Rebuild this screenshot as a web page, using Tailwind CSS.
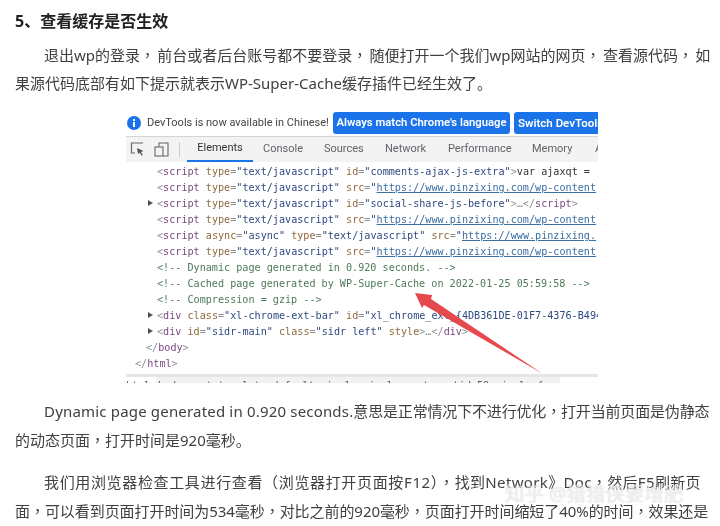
<!DOCTYPE html>
<html lang="zh">
<head>
<meta charset="utf-8">
<script src="https://cdn.jsdelivr.net/npm/@tailwindcss/browser@4"></script>
</head>
<body class="bg-white">
<main class="relative w-[720px] h-[526px] overflow-hidden px-[15px] text-[#404040] font-['Noto_Sans','Noto_Sans_CJK_SC',sans-serif]">
  <h2 class="pt-[9px] h-[40px] text-[16px] leading-[24px] font-bold text-[#222] whitespace-nowrap blur-[0.3px]">5、查看缓存是否生效</h2>
  <p class="text-[15px] leading-[29px] whitespace-nowrap blur-[0.3px]"><span class="block h-[29px] pl-[29px]">退出wp的登录<span lang="zh-TW" class="tracking-[2.25px] font-['Noto_Sans_CJK_TC']">，</span>前台或者后台账号都不要登录<span lang="zh-TW" class="tracking-[2.25px] font-['Noto_Sans_CJK_TC']">，</span>随便打开一个我们wp网站的网页<span lang="zh-TW" class="tracking-[2.25px] font-['Noto_Sans_CJK_TC']">，</span>查看源代码<span lang="zh-TW" class="tracking-[2.25px] font-['Noto_Sans_CJK_TC']">，</span>如</span><span class="block h-[29px]">果源代码底部有如下提示就表示WP-Super-Cache缓存插件已经生效了。</span></p>

  <figure class="relative ml-[111px] mt-[12px] w-[472px] h-[277px] overflow-hidden blur-[0.4px]">
    <div class="flex items-center h-[26px] font-['Roboto',sans-serif] whitespace-nowrap">
      <svg class="ml-[1px] mr-[6px] shrink-0" width="14" height="14" viewBox="0 0 14 14"><circle cx="7" cy="7" r="7" fill="#1a73e8"/><rect x="6" y="6" width="2" height="5" fill="#fff"/><rect x="6" y="3" width="2" height="2" fill="#fff"/></svg>
      <span class="w-[186px] shrink-0 text-[#444] text-[11px]">DevTools is now available in Chinese!</span>
      <span class="flex items-center justify-center w-[177px] h-[22px] shrink-0 rounded-[3px] bg-[#1a73e8] text-white font-semibold text-[11.3px]">Always match Chrome's language</span>
      <span class="block ml-[4px] pl-[4px] w-[84px] h-[22px] leading-[22px] shrink-0 overflow-hidden rounded-l-[3px] bg-[#1a73e8] text-white font-semibold text-[11.5px]">Switch DevTools</span>
    </div>
    <div class="flex items-center h-[26px] bg-[#f3f3f3] border-t border-[#d4d4d4] font-['Roboto',sans-serif] text-[11px] text-[#5f6368] whitespace-nowrap">
      <svg class="ml-[4px] shrink-0" width="15" height="15" viewBox="0 0 15 15" fill="none"><path d="M13 1H1.5V11H5" stroke="#666" stroke-width="1.2"/><path d="M7 6l6.5 3-2.6 1 2 3-1.2.8-2-3L8 12z" fill="#555"/></svg>
      <svg class="ml-[9px] shrink-0" width="15" height="15" viewBox="0 0 15 15" fill="none"><path d="M5 4.5V1h9v13H9" stroke="#666" stroke-width="1.1"/><rect x="1" y="5" width="8" height="9" stroke="#666" stroke-width="1.1"/></svg>
      <span class="ml-[10px] w-px h-[15px] bg-[#ccc] shrink-0"></span>
      <span class="flex items-center justify-center ml-[7px] w-[66px] h-full text-[#333] border-b-2 border-[#1a73e8] shrink-0">Elements</span>
      <span class="ml-[10px] w-[61px] shrink-0">Console</span>
      <span class="w-[61px] shrink-0">Sources</span>
      <span class="w-[63px] shrink-0">Network</span>
      <span class="w-[84px] shrink-0">Performance</span>
      <span class="w-[63px] shrink-0">Memory</span>
      <span class="shrink-0">A</span>
    </div>
    <div class="pt-[2px] font-['DejaVu_Sans_Mono',monospace] text-[10.15px] leading-[16px] text-[#8a8f96] whitespace-nowrap">
      <div class="pl-[31px]">&lt;<span class="text-[#7b4a80]">script</span> <span class="text-[#8f6a3a]">type</span>=<span class="text-[#2e4a80]">"text/javascript"</span> <span class="text-[#8f6a3a]">id</span>=<span class="text-[#2e4a80]">"comments-ajax-js-extra"</span>&gt;<span class="text-[#333]">var ajaxqt =</span></div>
      <div class="pl-[31px]">&lt;<span class="text-[#7b4a80]">script</span> <span class="text-[#8f6a3a]">type</span>=<span class="text-[#2e4a80]">"text/javascript"</span> <span class="text-[#8f6a3a]">src</span>=<span class="text-[#2e4a80]">"<span class="underline text-[#3a6ea5]">https://www.pinzixing.com/wp-content</span></span></div>
      <div class="relative pl-[31px]"><span class="absolute left-[22px] top-[4px] w-0 h-0 border-y-[3.5px] border-y-transparent border-l-[5px] border-l-[#555]"></span>&lt;<span class="text-[#7b4a80]">script</span> <span class="text-[#8f6a3a]">type</span>=<span class="text-[#2e4a80]">"text/javascript"</span> <span class="text-[#8f6a3a]">id</span>=<span class="text-[#2e4a80]">"social-share-js-before"</span>&gt;…&lt;/<span class="text-[#7b4a80]">script</span>&gt;</div>
      <div class="pl-[31px]">&lt;<span class="text-[#7b4a80]">script</span> <span class="text-[#8f6a3a]">type</span>=<span class="text-[#2e4a80]">"text/javascript"</span> <span class="text-[#8f6a3a]">src</span>=<span class="text-[#2e4a80]">"<span class="underline text-[#3a6ea5]">https://www.pinzixing.com/wp-content</span></span></div>
      <div class="pl-[31px]">&lt;<span class="text-[#7b4a80]">script</span> <span class="text-[#8f6a3a]">async</span>=<span class="text-[#2e4a80]">"async"</span> <span class="text-[#8f6a3a]">type</span>=<span class="text-[#2e4a80]">"text/javascript"</span> <span class="text-[#8f6a3a]">src</span>=<span class="text-[#2e4a80]">"<span class="underline text-[#3a6ea5]">https://www.pinzixing.</span></span></div>
      <div class="pl-[31px]">&lt;<span class="text-[#7b4a80]">script</span> <span class="text-[#8f6a3a]">type</span>=<span class="text-[#2e4a80]">"text/javascript"</span> <span class="text-[#8f6a3a]">src</span>=<span class="text-[#2e4a80]">"<span class="underline text-[#3a6ea5]">https://www.pinzixing.com/wp-content</span></span></div>
      <div class="pl-[31px] text-[#4f7a5a]">&lt;!-- Dynamic page generated in 0.920 seconds. --&gt;</div>
      <div class="pl-[31px] text-[#4f7a5a]">&lt;!-- Cached page generated by WP-Super-Cache on 2022-01-25 05:59:58 --&gt;</div>
      <div class="pl-[31px] text-[#4f7a5a]">&lt;!-- Compression = gzip --&gt;</div>
      <div class="relative pl-[31px]"><span class="absolute left-[22px] top-[4px] w-0 h-0 border-y-[3.5px] border-y-transparent border-l-[5px] border-l-[#555]"></span>&lt;<span class="text-[#7b4a80]">div</span> <span class="text-[#8f6a3a]">class</span>=<span class="text-[#2e4a80]">"xl-chrome-ext-bar"</span> <span class="text-[#8f6a3a]">id</span>=<span class="text-[#2e4a80]">"xl_chrome_ext_{4DB361DE-01F7-4376-B494</span></div>
      <div class="relative pl-[31px]"><span class="absolute left-[22px] top-[4px] w-0 h-0 border-y-[3.5px] border-y-transparent border-l-[5px] border-l-[#555]"></span>&lt;<span class="text-[#7b4a80]">div</span> <span class="text-[#8f6a3a]">id</span>=<span class="text-[#2e4a80]">"sidr-main"</span> <span class="text-[#8f6a3a]">class</span>=<span class="text-[#2e4a80]">"sidr left"</span> <span class="text-[#8f6a3a]">style</span>&gt;…&lt;/<span class="text-[#7b4a80]">div</span>&gt;</div>
      <div class="pl-[20px]">&lt;/<span class="text-[#7b4a80]">body</span>&gt;</div>
      <div class="pl-[9px]">&lt;/<span class="text-[#7b4a80]">html</span>&gt;</div>
    </div>
    <div class="h-[3px] mt-[2px] bg-[#e6e6e6]"></div>
    <div class="flex w-[434px] h-[6px] overflow-hidden font-['DejaVu_Sans_Mono',monospace] text-[10px] leading-[12px] text-[#555] whitespace-nowrap">
      <span class="block w-[30px] pt-[3px] shrink-0">html</span>
      <span class="block flex-1 pt-[3px] pl-[2px] bg-[#f1f1f1]">body.post-template-default.single.single-post.postid-58.single-format-standard</span>
    </div>
    <svg class="absolute left-0 top-0" width="472" height="277" viewBox="0 0 472 277"><path d="M289 183L306 185L305 189L417 264L298 195L296 198Z" fill="#e5484d"/></svg>
  </figure>

  <p class="mt-[9px] text-[15px] leading-[29px] whitespace-nowrap blur-[0.3px]"><span class="block h-[29px] pl-[29px]"><span class="tracking-[0.18px]">Dynamic page generated in 0.920 seconds.</span><span class="tracking-[-0.17px]">意思是正常情况下不进行优化<span lang="zh-TW" class="font-['Noto_Sans_CJK_TC']">，</span>打开当前页面是伪静态</span></span><span class="block h-[29px]">的动态页面<span lang="zh-TW" class="font-['Noto_Sans_CJK_TC']">，</span>打开时间是920毫秒。</span></p>
  <p class="mt-[13px] text-[15px] leading-[29px] whitespace-nowrap blur-[0.3px]"><span class="block h-[29px] pl-[29px]"><span class="tracking-[0.65px]">我们用浏览器检查工具进行查看（浏览器打开页面按F12）<span lang="zh-TW" class="font-['Noto_Sans_CJK_TC']">，</span></span><span class="tracking-[0.35px]">找到Network》Doc<span lang="zh-TW" class="font-['Noto_Sans_CJK_TC']">，</span>然后F5刷新页</span></span><span class="block h-[29px] tracking-[-0.06px]">面<span lang="zh-TW" class="font-['Noto_Sans_CJK_TC']">，</span>可以看到页面打开时间为534毫秒<span lang="zh-TW" class="font-['Noto_Sans_CJK_TC']">，</span>对比之前的920毫秒<span lang="zh-TW" class="font-['Noto_Sans_CJK_TC']">，</span>页面打开时间缩短了40%的时间<span lang="zh-TW" class="font-['Noto_Sans_CJK_TC']">，</span>效果还是</span></p>
  <div class="absolute left-[505px] top-[480px] text-[19.5px] leading-[28px] font-medium text-white/65 whitespace-nowrap [text-shadow:0_0_1px_rgba(0,0,0,0.2)]">知乎 @猎猎侠要增肥</div>
</main>
</body>
</html>
